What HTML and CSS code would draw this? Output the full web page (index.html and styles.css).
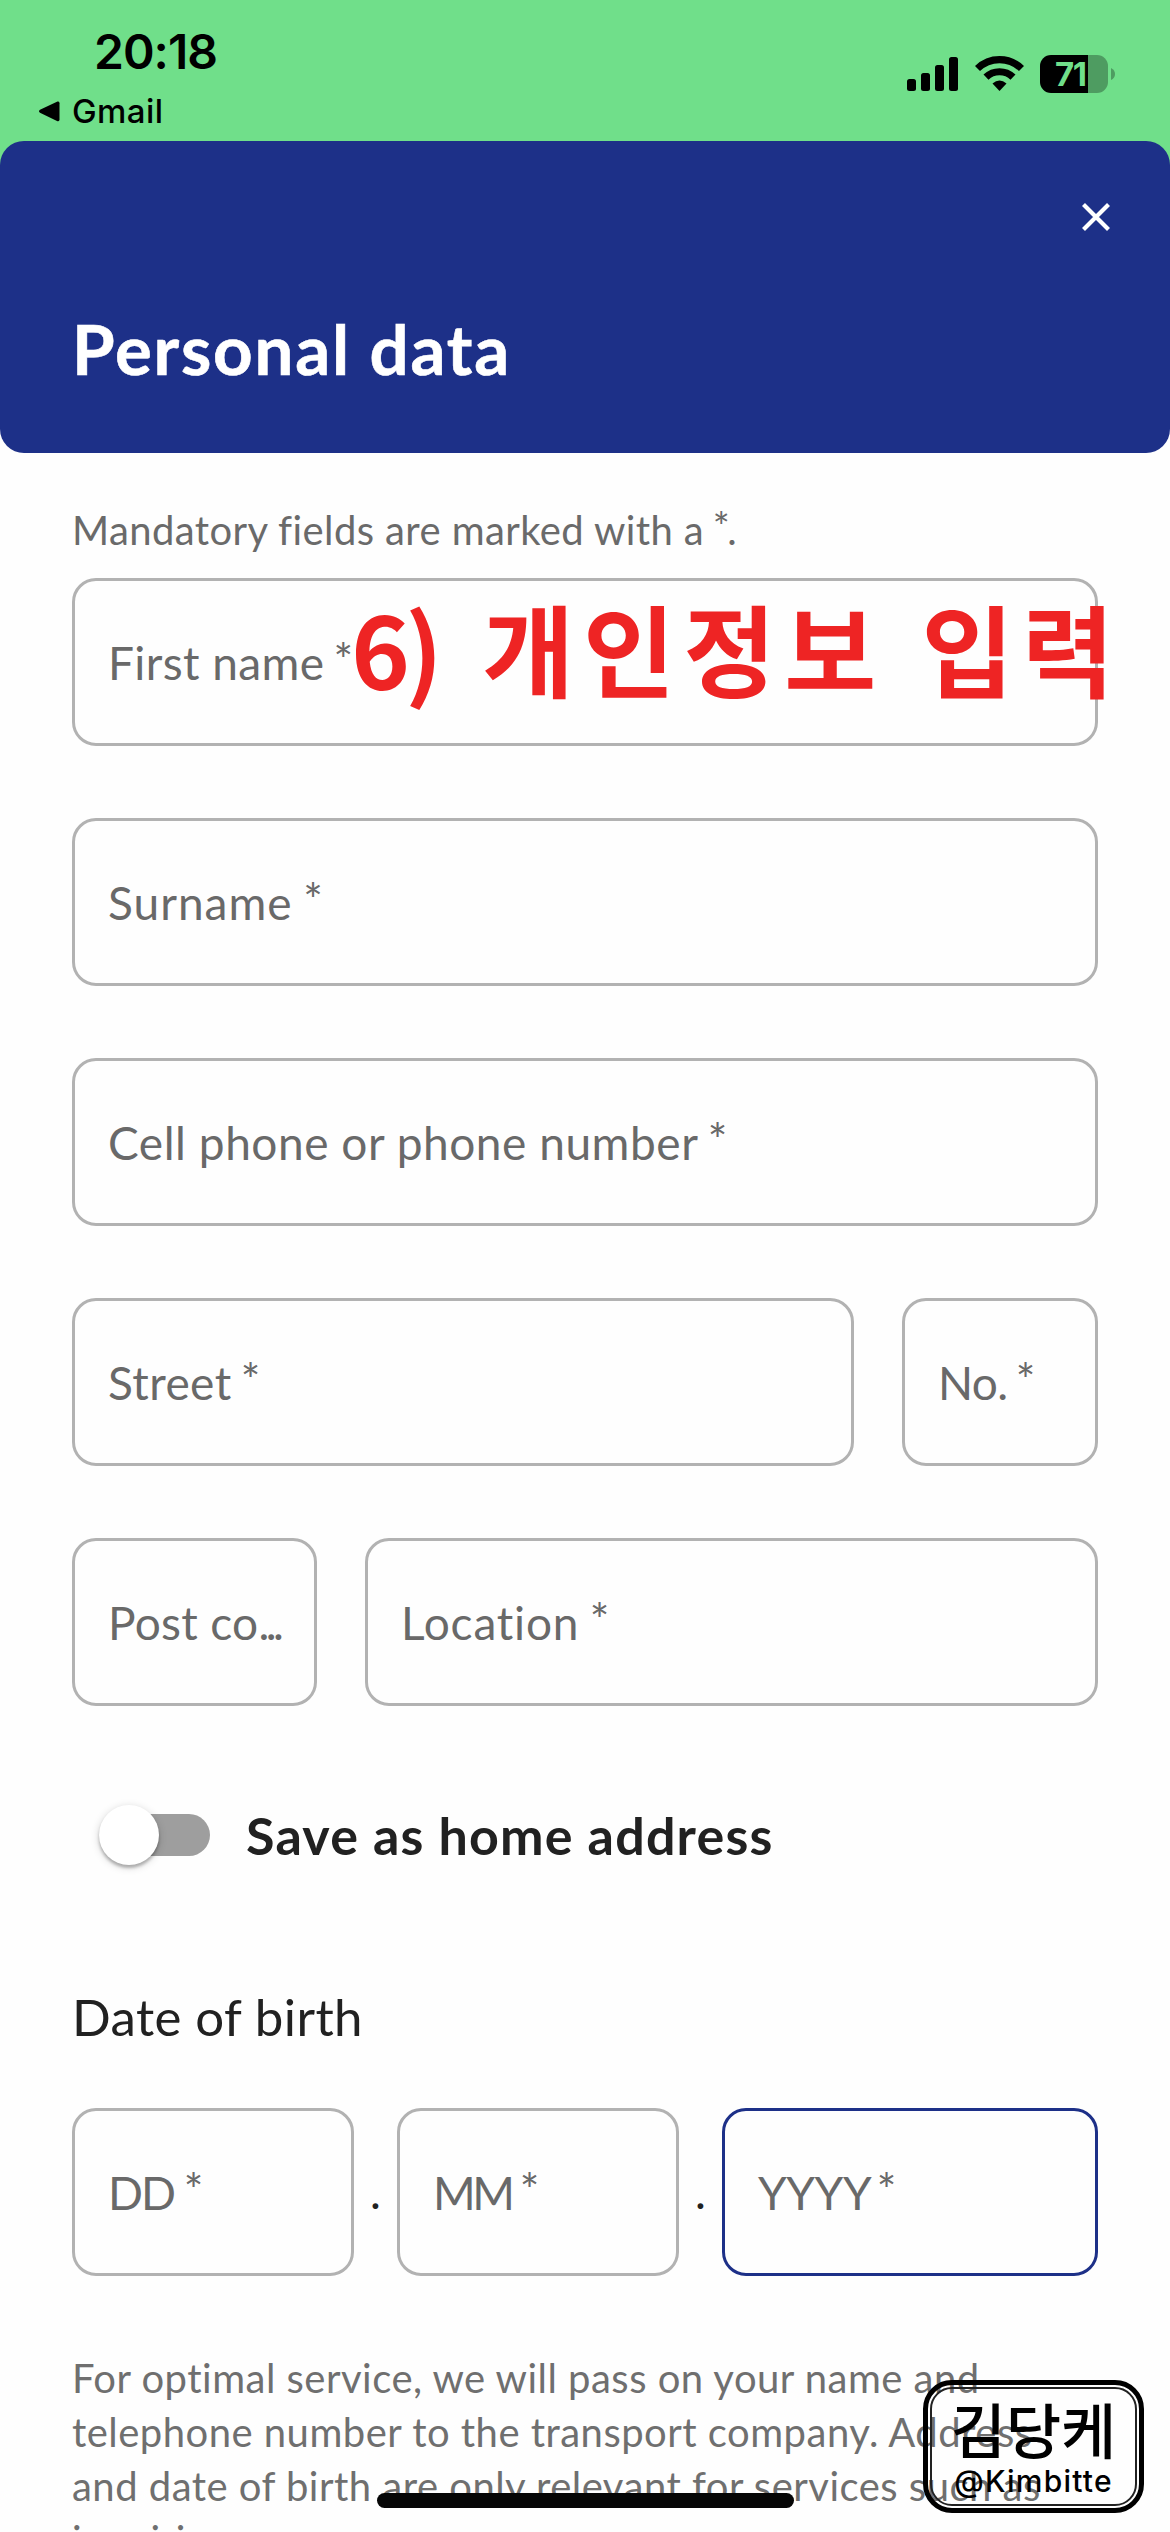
FILE: index.html
```html
<!DOCTYPE html>
<html lang="en">
<head>
<meta charset="utf-8">
<title>Personal data</title>
<link rel="stylesheet" href="styles.css">
</head>
<body>
<div class="screen">
  <div class="top">
    <div class="status">
      <div class="status-left">
        <div class="time">20:18</div>
        <div class="back">
          <svg class="back-arrow" viewBox="0 0 22 21"><path d="M19.5 .6 2 8.800Q0 10.300 2 11.800L19.500 20.200Q21.500 20.700 21.500 18.500V2.200Q21.500 0 19.500 .6Z"/></svg>
          <span>Gmail</span>
        </div>
      </div>
      <div class="status-icons">
        <svg class="signal" viewBox="0 0 51 34"><rect y="22" width="9" height="12" rx="2.500"/><rect x="14" y="16" width="9" height="18" rx="2.500"/><rect x="28" y="8" width="9" height="26" rx="2.500"/><rect x="42" width="9" height="34" rx="2.500"/></svg>
        <svg class="wifi" viewBox="0 0 49 36"><g fill="none" stroke="#000" stroke-width="7.200"><path d="M2.500 13.500A31.500 31.500 0 0 1 46.500 13.500"/><path d="M11 22.200A19.500 19.500 0 0 1 38 22.200"/></g><path d="M17.500 28.500Q24.500 22.500 31.500 28.500L24.500 36Z"/></svg>
        <div class="battery"><div class="cell"><span>71</span></div><svg class="nub" viewBox="0 0 4 12"><path d="M0 0Q4 2 4 6T0 12Z"/></svg></div>
      </div>
    </div>
  </div>
  <header class="header">
    <svg class="close" viewBox="0 0 30 30"><path d="M2.500 2.500 27.500 27.500M27.500 2.500 2.500 27.500"/></svg>
    <h1>Personal data</h1>
  </header>
  <main class="form">
    <p class="hint">Mandatory fields are marked with a <span class="star">*</span>.</p>
    <div class="fields">
      <div class="row"><div class="field first">First name <span class="star">*</span></div></div>
      <div class="row"><div class="field surname">Surname <span class="star">*</span></div></div>
      <div class="row"><div class="field phone">Cell phone or phone number <span class="star">*</span></div></div>
      <div class="row"><div class="field street">Street <span class="star">*</span></div><div class="field number">No. <span class="star">*</span></div></div>
      <div class="row"><div class="field post">Post co<span class="ellipsis">...</span></div><div class="field location">Location <span class="star">*</span></div></div>
    </div>
    <div class="toggle-row"><div class="switch"><div class="thumb"></div></div><span class="toggle-label">Save as home address</span></div>
    <h2>Date of birth</h2>
    <div class="dob"><div class="field dd">DD <span class="star">*</span></div><span class="dot">.</span><div class="field mm">MM <span class="star">*</span></div><span class="dot">.</span><div class="field yyyy">YYYY <span class="star">*</span></div></div>
    <p class="note">For optimal service, we will pass on your name and<br>telephone number to the transport company. Address<br>and date of birth are only relevant for services such as<br>inquiries.</p>
  </main>
  <div class="annotation"><span class="step">6</span><span class="paren">)</span> 개인정보 입력</div>
  <div class="home-indicator"></div>
  <div class="stamp"><div class="stamp-inner"><span class="stamp-name">김당케</span><span class="stamp-handle">@Kimbitte</span></div></div>
</div>
</body>
</html>
```
FILE: styles.css
```css
* { box-sizing: border-box; margin: 0; padding: 0; }
body { background: #fefefe; font-family: Lato, sans-serif; color: #212121; }
.screen { position: relative; width: 1170px; height: 2532px; overflow: hidden; }

.top { height: 165px; background: #70df8a; color: #000; }
.status { display: flex; justify-content: space-between; padding: 23px 55px 0 38px; font-family: Inter, sans-serif; }
.time { padding-left: 56px; font-size: 48px; line-height: 58px; font-weight: 600; letter-spacing: -1px; }
.back { display: flex; align-items: center; gap: 12px; height: 40px; margin-top: 10px; font-size: 33px; font-weight: 500; letter-spacing: .4px; }
.back-arrow { width: 22px; height: 21px; }
.status-icons { display: flex; align-items: flex-start; padding-top: 32px; }
.signal { width: 51px; height: 34px; margin: 2px 17px 0 0; }
.wifi { width: 49px; height: 36px; margin-right: 16px; }
.battery { display: flex; align-items: center; gap: 3px; }
.cell { width: 68px; height: 38px; padding-left: 15px; border-radius: 11px; background: linear-gradient(90deg, #000 48px, #4e9c61 48px); color: #70df8a; font-size: 33px; line-height: 38px; font-weight: 700; letter-spacing: -1.5px; }
.nub { width: 4px; height: 12px; fill: #4e9c61; }

.header { display: flex; flex-direction: column; height: 312px; margin-top: -24px; padding: 61px 59px 0 72px; border-radius: 24px; background: #1d3088; color: #fff; }
.close { align-self: flex-end; width: 30px; height: 30px; }
.close path { fill: none; stroke: #fff; stroke-width: 4.200; }
h1 { margin-top: 76px; font-size: 69px; line-height: 82px; font-weight: 700; letter-spacing: 1.8px; -webkit-text-stroke: .6px #fff; }

.form { padding: 49px 72px 0; }
.hint { height: 76px; font-size: 40px; line-height: 56px; letter-spacing: .4px; color: #6a6a6a; white-space: nowrap; }
.hint .star { margin-left: -2px; margin-right: -3px; }
.star { line-height: 0; vertical-align: 3px; }
.fields { display: flex; flex-direction: column; gap: 72px; }
.row { display: flex; gap: 48px; }
.field { flex: 1; min-width: 0; height: 168px; padding: 0 33px; border: 3px solid #b2b2b2; border-radius: 24px; font-size: 46px; line-height: 163px; letter-spacing: .4px; color: #696969; white-space: nowrap; }
.first .star { margin-left: -3px; }
.surname { letter-spacing: 1px; }
.surname .star { margin-left: -2px; }
.phone { letter-spacing: .55px; }
.phone .star { margin-left: -2px; }
.street .star { margin-left: -3px; }
.number { flex: 0 0 196px; letter-spacing: -.6px; }
.number .star { margin-left: -3px; }
.post { flex: 0 0 245px; letter-spacing: .3px; }
.ellipsis { letter-spacing: -3.5px; }
.location { letter-spacing: .8px; }
.location .star { margin-left: -2px; }

.toggle-row { display: flex; align-items: center; gap: 36px; height: 80px; margin-top: 89px; padding-left: 36px; }
.switch { display: flex; align-items: center; width: 102px; height: 42px; border-radius: 21px; background: #9e9e9e; }
.thumb { flex: none; width: 60px; height: 60px; margin-left: -9px; border-radius: 50%; background: #fff; box-shadow: 0 3px 3px rgba(0,0,0,.24), 0 2px 8px rgba(0,0,0,.18); }
.toggle-label { font-size: 52px; line-height: 80px; font-weight: 700; letter-spacing: 1.2px; }
h2 { margin-top: 112px; font-size: 51px; line-height: 60px; font-weight: 400; letter-spacing: .4px; }
.dob { display: flex; margin-top: 61px; }
.dd, .mm { flex: 0 0 282px; }
.dd { letter-spacing: -2px; }
.mm { letter-spacing: -3.5px; }
.yyyy { letter-spacing: -.4px; border-color: #1d3088; }
.yyyy .star { margin-left: -4px; }
.dot { width: 43px; font-size: 46px; line-height: 168px; text-align: center; }
.note { margin-top: 75px; font-size: 40px; line-height: 54px; letter-spacing: .48px; color: #6f6f6f; white-space: nowrap; }

.annotation { position: absolute; left: 351px; top: 574px; font-family: "Noto Sans CJK KR", sans-serif; font-size: 100px; line-height: 146px; font-weight: 700; letter-spacing: 8.7px; word-spacing: 5px; color: #ee2424; white-space: nowrap; }
.step { letter-spacing: -5px; }
.paren { letter-spacing: 3px; }
.home-indicator { position: absolute; left: 377px; top: 2493px; width: 417px; height: 15px; border-radius: 8px; background: #060606; }
.stamp { position: absolute; left: 923px; top: 2380px; width: 221px; height: 133px; padding: 2px; border: 5px solid #000; border-radius: 29px; color: #000; }
.stamp-inner { display: flex; flex-direction: column; align-items: center; height: 100%; border: 2px solid #222; border-radius: 22px; font-family: "Noto Sans CJK KR", sans-serif; }
.stamp-name { margin-top: 4px; font-size: 60px; line-height: 70px; font-weight: 500; white-space: nowrap; }
.stamp-handle { font-family: Inter, sans-serif; font-size: 30px; line-height: 36px; font-weight: 500; letter-spacing: 1.2px; }
```
